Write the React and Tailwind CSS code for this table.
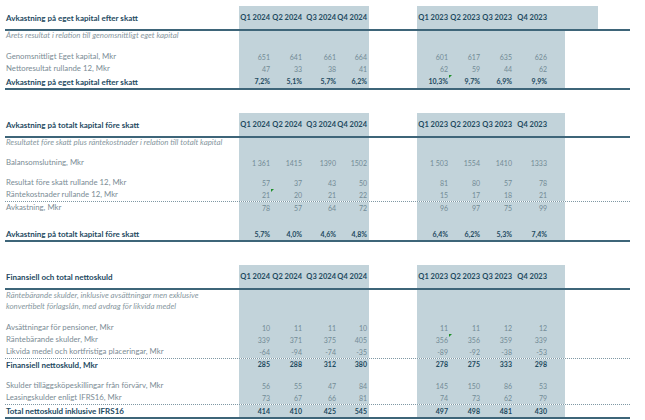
import React from "react";

const W1 = ["w-[31px]", "w-[32px]", "w-[34px]", "w-[31px]"];
const W2 = ["w-[31px]", "w-[32px]", "w-[32px]", "w-[35px]"];

const Mark = () => (
  <span className="absolute left-[1px] top-0 w-0 h-0 border-t-[3px] border-r-[3px] border-t-[#1f8f2a] border-r-transparent" />
);

const Cells = ({ vals, widths, bold, marks = [] }) =>
  widths.map((w, i) => (
    <div
      key={i}
      className={`${w} relative flex items-center justify-end ${
        bold ? "font-bold text-[#1e4a5f]" : "text-[#738b96]"
      }`}
    >
      {marks.includes(i) && <Mark />}
      {vals ? vals[i] : ""}
    </div>
  ));

const Row = ({ label, a, b, h, bold, line, italic, marksA, marksB, ext }) => {
  let border = "";
  if (line === "solid") border = "border-b-2 border-[#3e6579]";
  if (line === "dot") border = "border-b border-dotted border-[#7f98a4]";
  return (
    <div className={`flex ${h} ${border}`}>
      <div
        className={`w-[234px] flex items-center pl-[1px] whitespace-nowrap ${
          bold
            ? "font-bold text-[8px] text-[#1e4a5f]"
            : italic
            ? "italic text-[7.9px] text-[#8797a0]"
            : "text-[7.8px] text-[#7b8c95]"
        }`}
      >
        {label}
      </div>
      <div className="w-[130px] flex bg-[#c2d3da]">
        <Cells vals={a} widths={W1} bold={bold} marks={marksA} />
      </div>
      <div className="w-[48px]" />
      <div className="w-[148px] flex bg-[#c2d3da]">
        <Cells vals={b} widths={W2} bold={bold} marks={marksB} />
      </div>
      <div className="flex-1 flex">
        {ext && <div className="w-[33px] bg-[#c2d3da]" />}
      </div>
    </div>
  );
};

const Q24 = ["Q1 2024", "Q2 2024", "Q3 2024", "Q4 2024"];
const Q23 = ["Q1 2023", "Q2 2023", "Q3 2023", "Q4 2023"];

const Header = ({ title, ext }) => (
  <div className="text-[7.5px]">
    <Row label={title} a={Q24} b={Q23} h="h-[25px]" bold line="solid" ext={ext} />
  </div>
);

export default function App() {
  return (
    <div
      className="w-[645px] h-[420px] bg-white pl-[5px] pr-[15px] pt-[6px] text-[7px] leading-none overflow-hidden"
      style={{ fontFamily: "Lato, 'Open Sans', sans-serif" }}
    >
      {/* eget kapital */}
      <Header title="Avkastning på eget kapital efter skatt" ext />
      <Row label="Årets resultat i relation till genomsnittligt eget kapital" italic h="h-[10px]" />
      <Row h="h-[10px]" />
      <Row label="Genomsnittligt Eget kapital, Mkr" a={["651", "641", "661", "664"]} b={["601", "617", "635", "626"]} h="h-[12px]" />
      <Row label="Nettoresultat rullande 12, Mkr" a={["47", "33", "38", "41"]} b={["62", "59", "44", "62"]} h="h-[12px]" />
      <Row
        label="Avkastning på eget kapital efter skatt"
        a={["7,2%", "5,1%", "5,7%", "6,2%"]}
        b={["10,3%", "9,7%", "6,9%", "9,9%"]}
        h="h-[15px]"
        bold
        line="solid"
        marksB={[1]}
      />

      {/* totalt kapital */}
      <div className="h-[23px]" />
      <Header title="Avkastning på totalt kapital före skatt" />
      <Row label="Resultatet före skatt plus räntekostnader i relation till totalt kapital" italic h="h-[10px]" />
      <Row h="h-[9px]" />
      <Row label="Balansomslutning, Mkr" a={["1 361", "1415", "1390", "1502"]} b={["1 503", "1554", "1410", "1333"]} h="h-[12px]" />
      <Row h="h-[8px]" />
      <Row label="Resultat före skatt rullande 12, Mkr" a={["57", "37", "43", "50"]} b={["81", "80", "57", "78"]} h="h-[12px]" />
      <Row
        label="Räntekostnader rullande 12, Mkr"
        a={["21", "20", "21", "22"]}
        b={["15", "17", "18", "21"]}
        h="h-[13px]"
        line="dot"
        marksA={[1]}
      />
      <Row label="Avkastning, Mkr" a={["78", "57", "64", "72"]} b={["96", "97", "75", "99"]} h="h-[12px]" />
      <Row h="h-[14px]" />
      <Row
        label="Avkastning på totalt kapital före skatt"
        a={["5,7%", "4,0%", "4,6%", "4,8%"]}
        b={["6,4%", "6,2%", "5,3%", "7,4%"]}
        h="h-[14px]"
        bold
        line="solid"
      />

      {/* nettoskuld */}
      <div className="h-[23px]" />
      <Header title="Finansiell och total nettoskuld" />
      <Row label="Räntebärande skulder, inklusive avsättningar men exklusive" italic h="h-[11px]" />
      <Row label="konvertibelt förlagslån, med avdrag för likvida medel" italic h="h-[11px]" />
      <Row h="h-[10px]" />
      <Row label="Avsättningar för pensioner, Mkr" a={["10", "11", "11", "10"]} b={["11", "11", "12", "12"]} h="h-[12px]" />
      <Row
        label="Räntebärande skulder, Mkr"
        a={["339", "371", "375", "405"]}
        b={["356", "356", "359", "339"]}
        h="h-[12px]"
        marksB={[1]}
      />
      <Row
        label="Likvida medel och kortfristiga placeringar, Mkr"
        a={["-64", "-94", "-74", "-35"]}
        b={["-89", "-92", "-38", "-53"]}
        h="h-[13px]"
        line="dot"
      />
      <Row label="Finansiell nettoskuld, Mkr" a={["285", "288", "312", "380"]} b={["278", "275", "333", "298"]} h="h-[11px]" bold />
      <Row h="h-[10px]" />
      <Row label="Skulder tilläggsköpeskillingar från förvärv, Mkr" a={["56", "55", "47", "84"]} b={["145", "150", "86", "53"]} h="h-[12px]" />
      <Row
        label="Leasingskulder enligt IFRS16, Mkr"
        a={["73", "67", "66", "81"]}
        b={["74", "73", "62", "79"]}
        h="h-[13px]"
        line="dot"
      />
      <Row
        label="Total nettoskuld inklusive IFRS16"
        a={["414", "410", "425", "545"]}
        b={["497", "498", "481", "430"]}
        h="h-[14px]"
        bold
        line="solid"
      />
    </div>
  );
}
